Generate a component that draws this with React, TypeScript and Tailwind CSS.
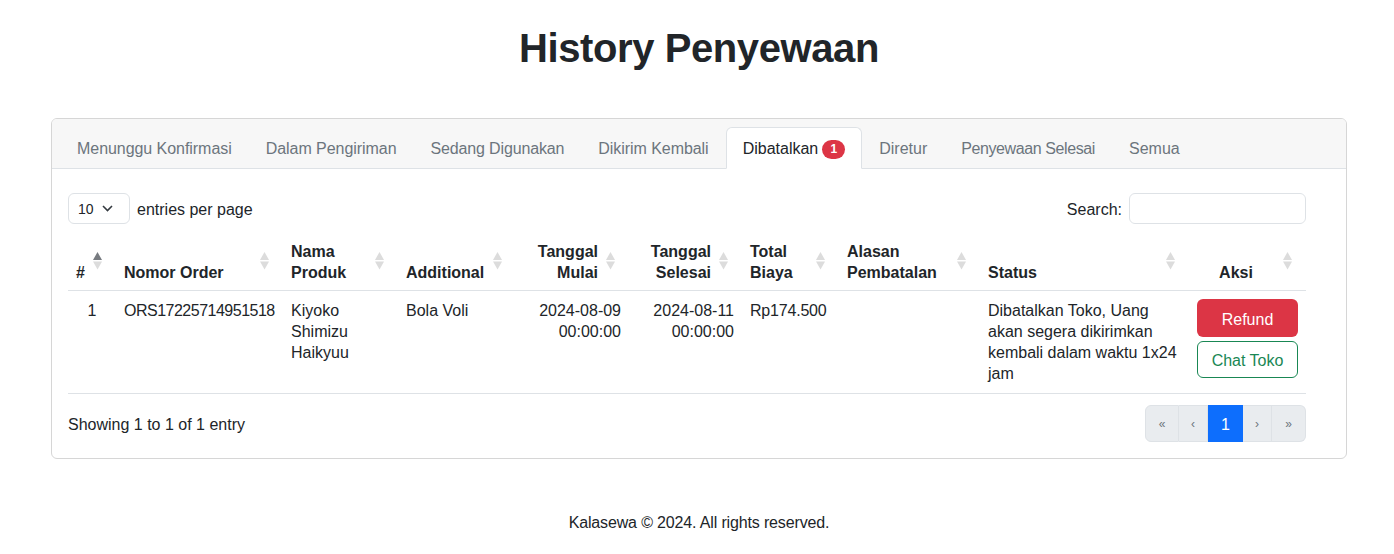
import React from "react";

const Sort = ({ active }: { active?: boolean }) => (
  <svg
    className="absolute right-[14px] top-1/2 -translate-y-1/2"
    width="9"
    height="18"
    viewBox="0 0 9 18"
  >
    <polygon points="4.5,0 9,8 0,8" fill={active ? "#777b80" : "#dcdcdc"} />
    <polygon points="0,9.5 9,9.5 4.5,17.5" fill="#dcdcdc" />
  </svg>
);

type Col = { w: number; label: React.ReactNode; align?: "left" | "right" | "center"; active?: boolean };

const cols: Col[] = [
  { w: 48, label: "#", active: true },
  { w: 167, label: "Nomor Order" },
  { w: 115, label: <>Nama<br />Produk</> },
  { w: 118, label: "Additional" },
  { w: 113, label: <>Tanggal<br />Mulai</>, align: "right" },
  { w: 113, label: <>Tanggal<br />Selesai</>, align: "right" },
  { w: 97, label: <>Total<br />Biaya</> },
  { w: 141, label: <>Alasan<br />Pembatalan</> },
  { w: 209, label: "Status" },
  { w: 117, label: "Aksi", align: "center" },
];

const tabs: { t: string; cls: string }[] = [
  { t: "Menunggu Konfirmasi", cls: "tracking-[-0.05px]" },
  { t: "Dalam Pengiriman", cls: "tracking-[-0.05px]" },
  { t: "Sedang Digunakan", cls: "tracking-[-0.15px]" },
  { t: "Dikirim Kembali", cls: "tracking-[-0.05px]" },
  { t: "Dibatalkan", cls: "" },
  { t: "Diretur", cls: "" },
  { t: "Penyewaan Selesai", cls: "tracking-[-0.4px]" },
  { t: "Semua", cls: "" },
];

const td = "pt-[9px] pb-[9px] px-2";

export default function App() {
  return (
    <div
      className="min-h-[554px] bg-white text-[#212529] text-[16px]"
      style={{ fontFamily: '"Liberation Sans", Arial, sans-serif' }}
    >
      <div className="pl-[51px] pr-[47px] pt-6">
        <h1 className="text-center text-[40px] leading-[48px] font-bold tracking-[-0.4px] text-[#212529] mb-[46px]">
          History Penyewaan
        </h1>

        <div className="border border-[#d6d6d6] rounded-[6px] overflow-hidden">
          {/* header with tabs */}
          <div className="bg-[#f7f7f7] border-b border-[#dee2e6] pt-2 px-4">
            <div className="flex -ml-2 -mb-px">
              {tabs.map(({ t, cls }) => {
                const active = t === "Dibatalkan";
                return (
                  <div
                    key={t}
                    className={
                      active
                        ? "flex items-center gap-1 px-4 pt-[2px] h-[42px] border border-[#dee2e6] border-b-white bg-white rounded-t-[6px] text-[#212529]"
                        : "flex items-center px-4 pt-[2px] h-[42px] border border-transparent text-[#6c757d] " + cls
                    }
                  >
                    <span className="leading-6">{t}</span>
                    {active && (
                      <span className="inline-flex items-center justify-center h-[19px] min-w-[23px] px-[7px] rounded-full bg-[#dc3545] text-white text-[12px] font-bold leading-none">
                        1
                      </span>
                    )}
                  </div>
                );
              })}
            </div>
          </div>

          {/* body */}
          <div className="pl-4 pr-10 pt-4 pb-4">
            <div className="flex items-center justify-between pt-2 pb-[8px]">
              <div className="flex items-center gap-[7px]">
                <div className="flex items-center justify-between w-[62px] h-[31px] border border-[#dee2e6] rounded-[6px] pl-[9px] pr-[16px] text-[14px]">
                  <span className="pt-px">10</span>
                  <svg width="11" height="7" viewBox="0 0 11 7">
                    <path d="M1 1l4.5 4.5L10 1" fill="none" stroke="#343a40" strokeWidth="1.6" />
                  </svg>
                </div>
                <span className="pt-[2px]">entries per page</span>
              </div>
              <div className="flex items-center gap-[7px]">
                <span className="pt-[2px]">Search:</span>
                <div className="w-[177px] h-[31px] border border-[#dee2e6] rounded-[6px]" />
              </div>
            </div>

            <table className="table-fixed border-collapse w-[1238px] leading-[21px]">
              <colgroup>
                {cols.map((c, i) => (
                  <col key={i} style={{ width: c.w }} />
                ))}
              </colgroup>
              <thead>
                <tr className="border-b border-[#dee2e6]">
                  {cols.map((c, i) => (
                    <th
                      key={i}
                      className={
                        "relative align-bottom font-bold whitespace-nowrap pt-[9px] pb-[7px] pl-2 pr-[31px] " +
                        (c.align === "right"
                          ? "text-right"
                          : c.align === "center"
                          ? "text-center"
                          : "text-left")
                      }
                    >
                      {c.label}
                      <Sort active={c.active} />
                    </th>
                  ))}
                </tr>
              </thead>
              <tbody>
                <tr className="border-b border-[#dee2e6] align-top">
                  <td className={td + " text-center"}>1</td>
                  <td className={td + " tracking-[-0.5px]"}>ORS17225714951518</td>
                  <td className={td}>
                    Kiyoko
                    <br />
                    Shimizu
                    <br />
                    Haikyuu
                  </td>
                  <td className={td}>Bola Voli</td>
                  <td className={td + " text-right"}>
                    2024-08-09
                    <br />
                    00:00:00
                  </td>
                  <td className={td + " text-right"}>
                    2024-08-11
                    <br />
                    00:00:00
                  </td>
                  <td className={td + " tracking-[-0.2px]"}>Rp174.500</td>
                  <td className={td}></td>
                  <td className={td + " whitespace-nowrap"}>
                    Dibatalkan Toko, Uang
                    <br />
                    akan segera dikirimkan
                    <br />
                    kembali dalam waktu 1x24
                    <br />
                    jam
                  </td>
                  <td className="pt-2 pb-2 px-2">
                    <div className="flex flex-col gap-1">
                      <div className="h-[38px] pt-[2px] rounded-[6px] bg-[#dc3545] text-white flex items-center justify-center">
                        Refund
                      </div>
                      <div className="h-[37px] pt-[2px] rounded-[6px] border border-[#198754] text-[#198754] flex items-center justify-center">
                        Chat Toko
                      </div>
                    </div>
                  </td>
                </tr>
              </tbody>
            </table>

            <div className="flex items-center justify-between pt-[11px]">
              <span className="pt-[2px]">Showing 1 to 1 of 1 entry</span>
              <div className="flex h-[37px] text-[12px] text-[#6c757d]">
                <div className="w-[34px] flex items-center justify-center bg-[#e9ecef] border border-[#dee2e6] rounded-l-[6px]">«</div>
                <div className="w-[29px] flex items-center justify-center bg-[#e9ecef] border-y border-r border-[#dee2e6]">‹</div>
                <div className="w-[35px] flex items-center justify-center bg-[#0d6efd] text-white text-[16px] pt-[2px]">1</div>
                <div className="w-[29px] flex items-center justify-center bg-[#e9ecef] border-y border-r border-[#dee2e6]">›</div>
                <div className="w-[34px] flex items-center justify-center bg-[#e9ecef] border-y border-r border-[#dee2e6] rounded-r-[6px]">»</div>
              </div>
            </div>
          </div>
        </div>

        <footer className="text-center mt-[52px] leading-6 pb-5 tracking-[-0.15px]">
          Kalasewa © 2024. All rights reserved.
        </footer>
      </div>
    </div>
  );
}
